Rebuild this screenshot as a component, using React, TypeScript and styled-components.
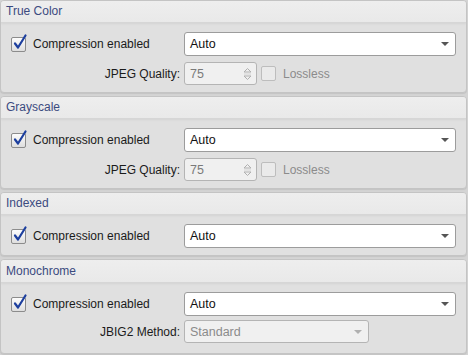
import React from 'react'
import styled, { createGlobalStyle } from 'styled-components'

const GlobalStyle = createGlobalStyle`
  html, body {
    margin: 0;
    padding: 0;
    background: #d4d4d4;
  }
  body {
    font-family: "Liberation Sans", Arial, sans-serif;
    font-size: 12px;
    color: #1b1b1b;
  }
`;

const Page = styled.div`
  width: 468px;
  height: 355px;
  box-sizing: border-box;
  padding: 0 1px 0 0;
  display: flex;
  flex-direction: column;
  gap: 3px;
  background: #d4d4d4;
  overflow: hidden;
`;

const Panel = styled.section`
  border: 1px solid #c4c4c4;
  border-radius: 4px;
  background: #e0e0e0;
  box-shadow: 0 1px 1px rgba(0, 0, 0, 0.08);
  overflow: hidden;
`;

const PanelHeader = styled.div<{ tall?: boolean }>`
  height: ${({ tall }) => (tall ? 22 : 21)}px;
  line-height: ${({ tall }) => (tall ? 22 : 21)}px;
  padding-left: 5px;
  color: #3b4a7f;
  background: linear-gradient(#eeeeee, #e9e9e9);
  border-bottom: 1px solid #d6d6d6;
  box-shadow: 0 1px 2px rgba(0, 0, 0, 0.06);
`;

const PanelBody = styled.div<{ tall?: boolean }>`
  display: grid;
  grid-template-columns: 169px 272px;
  column-gap: 4px;
  row-gap: ${({ tall }) => (tall ? 4 : 6)}px;
  padding: ${({ tall }) => (tall ? '9px 9px 10px 10px' : '9px 9px 7px 10px')};
`;

const CheckRow = styled.label`
  display: flex;
  align-items: center;
  gap: 7px;
`;

const FieldLabel = styled.div`
  display: flex;
  align-items: center;
  justify-content: flex-end;
`;

const Controls = styled.div`
  display: flex;
  align-items: center;
  gap: 4px;
`;

const Box = styled.span<{ disabled?: boolean }>`
  position: relative;
  width: 13px;
  height: 13px;
  flex: none;
  border: 1px solid ${({ disabled }) => (disabled ? '#bdbdbd' : '#8c8c8c')};
  border-radius: 2px;
  background: ${({ disabled }) =>
    disabled ? '#eaeaea' : 'linear-gradient(#fdfdfd, #dedede)'};

  svg {
    position: absolute;
    left: 1px;
    top: -4px;
    overflow: visible;
  }
`;

const Muted = styled.span`
  color: #8b8b8b;
`;

const SelectBox = styled.div<{ disabled?: boolean; width?: number; height?: number }>`
  position: relative;
  box-sizing: border-box;
  width: ${({ width }) => (width ? `${width}px` : '100%')};
  height: ${({ height }) => height || 24}px;
  padding-left: 5px;
  display: flex;
  align-items: center;
  border: 1px solid ${({ disabled }) => (disabled ? '#b4b4b4' : '#9c9c9c')};
  border-radius: 3px;
  background: ${({ disabled }) => (disabled ? '#f0f0f0' : '#ffffff')};
  color: ${({ disabled }) => (disabled ? '#8b8b8b' : '#111111')};
  font-size: 12.5px;
`;

const Arrow = styled.span<{ disabled?: boolean }>`
  position: absolute;
  right: 6px;
  top: 50%;
  margin-top: -2px;
  border-left: 4px solid transparent;
  border-right: 4px solid transparent;
  border-top: 4px solid ${({ disabled }) => (disabled ? '#b0b0b0' : '#555555')};
`;

const Spinner = styled.div`
  position: relative;
  box-sizing: border-box;
  width: 73px;
  height: 23px;
  padding-left: 5px;
  display: flex;
  align-items: center;
  border: 1px solid #b4b4b4;
  border-radius: 3px;
  background: #f0f0f0;
  color: #7a7a7a;
  font-size: 12.5px;

  svg {
    position: absolute;
    right: 4px;
    top: 4px;
  }
`;

const Check = ({ checked, disabled }: { checked?: boolean; disabled?: boolean }) => (
  <Box disabled={disabled}>
    {checked && (
      <svg width="14" height="16" viewBox="0 0 14 16">
        <path
          d="M2 9.5 L5 13.5 L12.5 1.5"
          fill="none"
          stroke="#1d3f9e"
          strokeWidth="2.2"
          strokeLinecap="round"
          strokeLinejoin="round"
        />
      </svg>
    )}
  </Box>
);

const Select = ({ value, disabled, width, height }: { value: string; disabled?: boolean; width?: number; height?: number }) => (
  <SelectBox disabled={disabled} width={width} height={height}>
    {value}
    <Arrow disabled={disabled} />
  </SelectBox>
);

const NumberField = ({ value }: { value: string }) => (
  <Spinner>
    {value}
    <svg width="9" height="14" viewBox="0 0 9 14">
      <path d="M1 5 L4.5 1.5 L8 5 Z" fill="none" stroke="#b0b0b0" />
      <path d="M1 7 H8" stroke="#d6d6d6" />
      <path d="M1 9 L4.5 12.5 L8 9 Z" fill="none" stroke="#b0b0b0" />
    </svg>
  </Spinner>
);

type Section = {
  title: string
  extra?: 'jpeg' | 'jbig2'
}

const sections: Section[] = [
  { title: 'True Color', extra: 'jpeg' },
  { title: 'Grayscale', extra: 'jpeg' },
  { title: 'Indexed' },
  { title: 'Monochrome', extra: 'jbig2' },
];

const App: React.FC = () => {
  return (
    <>
      <GlobalStyle />
      <Page>
        {sections.map(s => (
          <Panel key={s.title}>
            <PanelHeader tall={s.extra === 'jbig2'}>{s.title}</PanelHeader>
            <PanelBody tall={s.extra === 'jbig2'}>
              <CheckRow>
                <Check checked />
                Compression enabled
              </CheckRow>
              <Select value="Auto" />
              {s.extra === 'jpeg' && (
                <>
                  <FieldLabel>JPEG Quality:</FieldLabel>
                  <Controls>
                    <NumberField value="75" />
                    <CheckRow>
                      <Check disabled />
                      <Muted>Lossless</Muted>
                    </CheckRow>
                  </Controls>
                </>
              )}
              {s.extra === 'jbig2' && (
                <>
                  <FieldLabel>JBIG2 Method:</FieldLabel>
                  <Select value="Standard" disabled width={185} height={23} />
                </>
              )}
            </PanelBody>
          </Panel>
        ))}
      </Page>
    </>
  )
}

export default App
